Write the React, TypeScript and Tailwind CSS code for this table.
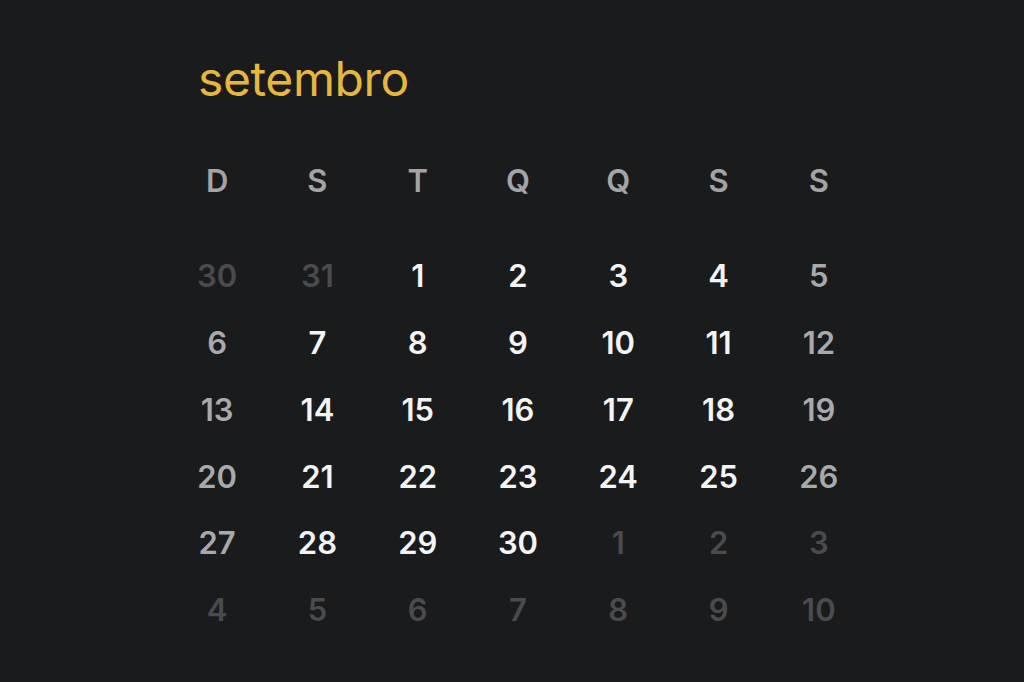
const weekdays = ["D", "S", "T", "Q", "Q", "S", "S"];

type Day = { n: number; muted?: boolean };

const days: Day[] = [
  { n: 30, muted: true },
  { n: 31, muted: true },
  ...Array.from({ length: 30 }, (_, i) => ({ n: i + 1 })),
  ...Array.from({ length: 10 }, (_, i) => ({ n: i + 1, muted: true })),
];

function dayColor(d: Day, col: number) {
  if (d.muted) return "text-[#4b4b4e]";
  if (col === 0 || col === 6) return "text-[#a9a9ab]";
  return "text-[#f4f4f5]";
}

export default function App() {
  return (
    <div className="min-h-screen w-full bg-[#1a1b1d] font-['Inter',sans-serif]">
      <div className="flex flex-col pl-[167px] pt-[43px]">
        <h1 className="pl-[31px] text-[48px] font-normal leading-normal tracking-[-0.4px] text-[#e7b73b]">
          setembro
        </h1>

        {/* weekday header */}
        <div className="mt-[33px] grid w-[702px] grid-cols-7">
          {weekdays.map((w, i) => (
            <div
              key={i}
              className="flex h-[67px] items-center justify-center text-[31px] font-semibold text-[#a4a4a6]"
            >
              {w}
            </div>
          ))}
        </div>

        {/* days */}
        <div className="mt-[28px] grid w-[702px] grid-cols-7">
          {days.map((d, i) => (
            <div
              key={i}
              className={`flex h-[66.8px] items-center justify-center text-[31px] font-semibold ${dayColor(d, i % 7)}`}
            >
              {d.n}
            </div>
          ))}
        </div>
      </div>
    </div>
  );
}
